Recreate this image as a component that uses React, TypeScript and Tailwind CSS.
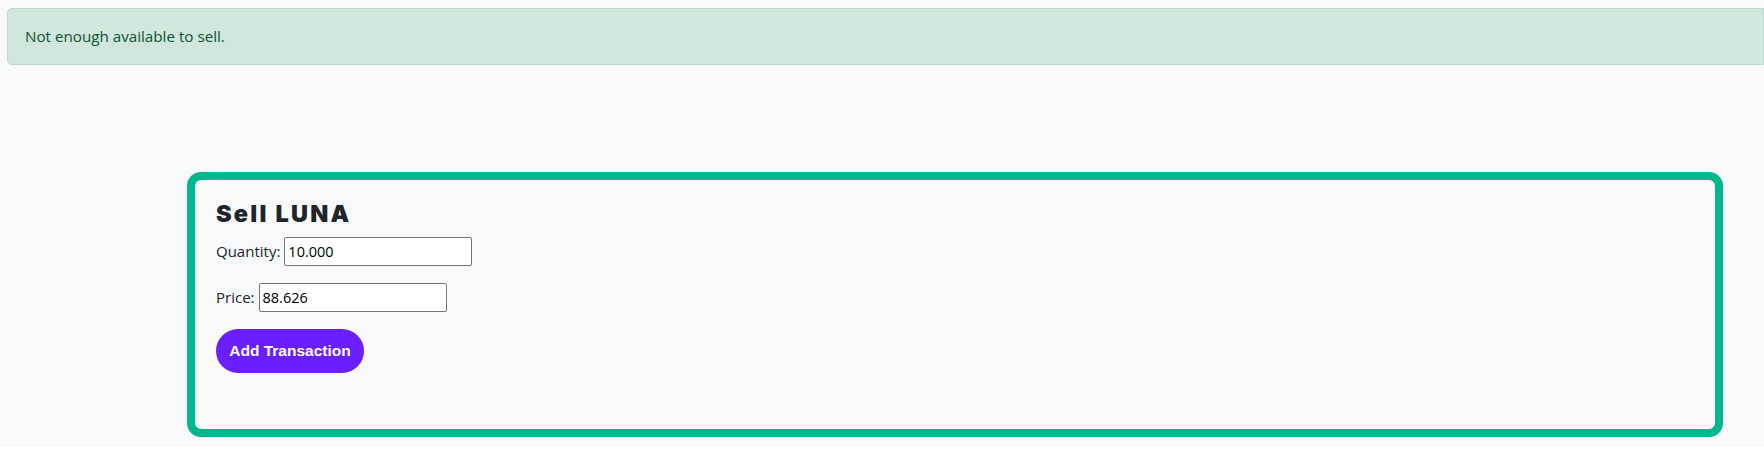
import React from "react";

export default function App() {
  const sans = { fontFamily: '"Open Sans", "Noto Sans", sans-serif' };
  return (
    <div className="w-[1764px] h-[464px] bg-white">
      <div className="h-[447px] bg-[#f8f9fa] pt-[8px]" style={sans}>
        <div className="ml-[7px] h-[57px] flex items-center px-[17px] bg-[#d1e7dd] border border-[#badbcc] rounded-l-[5px] text-[#0f5132] text-[15.2px]">
          Not enough available to sell.
        </div>
        <div className="mt-[107px] ml-[187px] w-[1536px] h-[265px] border-[8px] border-[#00b68c] rounded-[14px] pl-[21px] pt-[20px] text-[#212529]">
          <h2
            className="text-[23.5px] leading-[28px] font-black tracking-[2.2px] text-[#212529]"
            style={{ fontFamily: 'Inter, "Liberation Sans", sans-serif' }}
          >
            Sell LUNA
          </h2>
          <div className="mt-[9px] flex items-center gap-[4px] text-[15px]">
            <span>Quantity:</span>
            <input
              defaultValue="10.000"
              className="w-[188px] h-[29px] border border-[#767676] rounded-[2px] bg-white px-[3px] text-[14.5px] text-black outline-none"
            />
          </div>
          <div className="mt-[17px] flex items-center gap-[4px] text-[15px]">
            <span>Price:</span>
            <input
              defaultValue="88.626"
              className="w-[188px] h-[29px] border border-[#767676] rounded-[2px] bg-white px-[3px] text-[14.5px] text-black outline-none"
            />
          </div>
          <button
            className="mt-[17px] w-[148px] h-[44px] rounded-full bg-[#6b1fff] text-white font-bold text-[15.5px]"
            style={{ fontFamily: '"Liberation Sans", Arial, sans-serif' }}
          >
            Add Transaction
          </button>
        </div>
      </div>
    </div>
  );
}
